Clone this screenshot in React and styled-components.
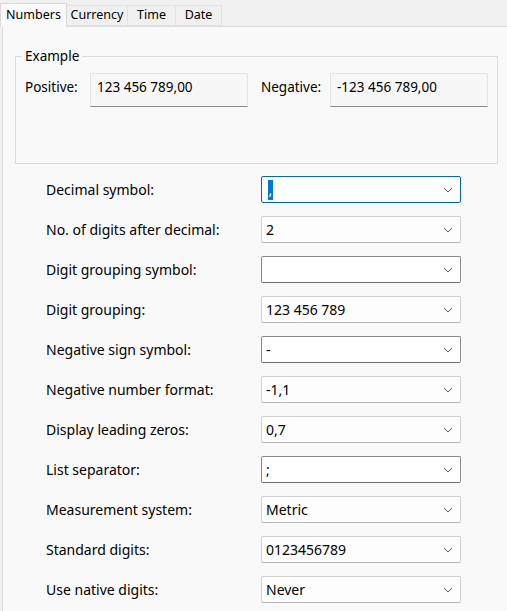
import React from 'react';
import styled, { createGlobalStyle } from 'styled-components';

const GlobalStyle = createGlobalStyle`
  html, body {
    margin: 0;
    padding: 0;
    background: #f0f0f0;
    font-family: "Noto Sans", "Open Sans", sans-serif;
    font-size: 13px;
    color: #000;
  }
`;

const Window = styled.div`
  width: 507px;
  height: 611px;
  overflow: hidden;
  background: #f0f0f0;
`;

const TabBar = styled.div`
  display: flex;
  align-items: flex-end;
  height: 26px;
  position: relative;
  z-index: 1;
`;

const Tab = styled.div`
  box-sizing: border-box;
  height: ${p => (p.$active ? '24px' : '21px')};
  margin-bottom: ${p => (p.$active ? '-1px' : '0')};
  display: flex;
  align-items: center;
  justify-content: center;
  white-space: nowrap;
  background: ${p => (p.$active ? '#f9f9f9' : '#f0f0f0')};
  border: 1px solid ${p => (p.$active ? '#d9d9d9' : '#e3e3e3')};
  border-bottom: ${p => (p.$active ? 'none' : '1px solid #e3e3e3')};
  border-left: ${p => (p.$first ? '1px solid #d9d9d9' : 'none')};
  font-size: 12.5px;
  line-height: 1;
  width: ${p => p.$w}px;
`;

const Panel = styled.div`
  margin-left: 2px;
  background: #f9f9f9;
  border-top: 1px solid #dcdcdc;
  border-left: 1px solid #dcdcdc;
  height: 590px;
  padding: 0 9px 0 12px;
`;

const Group = styled.fieldset`
  margin: 20px 0 0 0;
  border: 1px solid #dcdcdc;
  padding: 8px 9px 56px 9px;
  width: 483px;
  box-sizing: border-box;
`;

const Legend = styled.legend`
  padding: 0 3px;
  margin-left: -3px;
  line-height: 18px;
  font-size: 13.5px;
`;

const ExampleRow = styled.div`
  display: flex;
  align-items: flex-start;
`;

const ExLabel = styled.div`
  width: ${p => p.$w}px;
  padding-top: 5px;
  font-size: 13.5px;
`;

const ExBox = styled.div`
  box-sizing: border-box;
  width: 158px;
  height: 34px;
  padding: 4px 6px;
  background: #f7f7f7;
  border: 1px solid #e5e5e5;
  border-bottom: 1px solid #8a8a8a;
  font-size: 13.5px;
  margin-right: ${p => p.$gap || 0}px;
`;

const Form = styled.div`
  display: grid;
  grid-template-columns: 215px 200px;
  row-gap: 13px;
  margin-top: 12px;
  padding-left: 31px;
`;

const Label = styled.div`
  display: flex;
  align-items: center;
  height: 27px;
  font-size: 14px;
`;

const Select = styled.div`
  box-sizing: border-box;
  height: 27px;
  display: flex;
  align-items: center;
  justify-content: space-between;
  padding: 0 7px 0 4px;
  background: ${p => (p.$edit ? '#ffffff' : '#fdfdfd')};
  border: 1px solid ${p => (p.$focus ? '#0067c0' : p.$edit ? '#8a8a8a' : '#d0d0d0')};
  border-bottom-color: ${p => (p.$focus ? '#0067c0' : p.$edit ? '#6e6e6e' : '#b4b4b4')};
  border-radius: 2px;
  font-size: 14px;
`;

const Selected = styled.span`
  display: inline-block;
  background: #0078d4;
  color: #fff;
  width: 5px;
  height: 20px;
  margin-left: 2px;
  line-height: 20px;
  text-align: center;
`;

const Chevron = () => (
  <svg width="10" height="6" viewBox="0 0 10 6">
    <polyline points="1,1 5,5 9,1" fill="none" stroke="#606060" strokeWidth="1" />
  </svg>
);

const rows = [
  { label: 'Decimal symbol:', value: ',', edit: true, focus: true },
  { label: 'No. of digits after decimal:', value: '2' },
  { label: 'Digit grouping symbol:', value: '', edit: true },
  { label: 'Digit grouping:', value: '123 456 789' },
  { label: 'Negative sign symbol:', value: '-', edit: true },
  { label: 'Negative number format:', value: '-1,1' },
  { label: 'Display leading zeros:', value: '0,7' },
  { label: 'List separator:', value: ';', edit: true },
  { label: 'Measurement system:', value: 'Metric' },
  { label: 'Standard digits:', value: '0123456789' },
  { label: 'Use native digits:', value: 'Never' },
];

const tabs = [
  { name: 'Numbers', w: 67 },
  { name: 'Currency', w: 61 },
  { name: 'Time', w: 48 },
  { name: 'Date', w: 46 },
];

export default function App() {
  return (
    <Window>
      <GlobalStyle />
      <TabBar>
        {tabs.map((t, i) => (
          <Tab key={t.name} $w={t.w} $active={i === 0} $first={i === 0}>
            {t.name}
          </Tab>
        ))}
      </TabBar>
      <Panel>
        <Group>
          <Legend>Example</Legend>
          <ExampleRow>
            <ExLabel $w={65}>Positive:</ExLabel>
            <ExBox $gap={13}>123 456 789,00</ExBox>
            <ExLabel $w={69}>Negative:</ExLabel>
            <ExBox>-123 456 789,00</ExBox>
          </ExampleRow>
        </Group>
        <Form>
          {rows.map(r => (
            <React.Fragment key={r.label}>
              <Label>{r.label}</Label>
              <Select $edit={r.edit} $focus={r.focus}>
                {r.focus ? <Selected>{r.value}</Selected> : <span>{r.value}</span>}
                <Chevron />
              </Select>
            </React.Fragment>
          ))}
        </Form>
      </Panel>
    </Window>
  );
}
